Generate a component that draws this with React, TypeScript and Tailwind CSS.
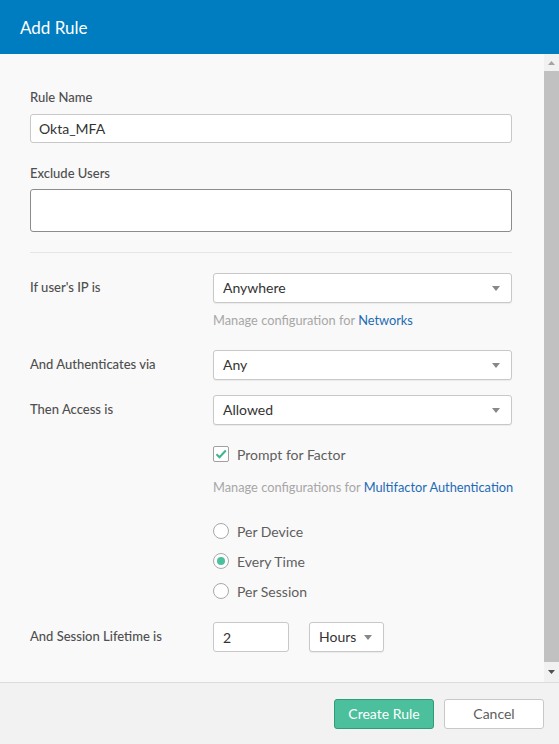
import React from "react";

const font = { fontFamily: "Lato, 'Liberation Sans', Arial, sans-serif" };

function Caret() {
  return (
    <svg width="8" height="5" viewBox="0 0 8 5" className="shrink-0">
      <path d="M0 0 L8 0 L4 5 Z" fill="#888" />
    </svg>
  );
}

function Select({ value, className = "" }: { value: string; className?: string }) {
  return (
    <div
      className={`h-[30px] flex items-center justify-between pl-[9px] pr-[11px] bg-white border border-[#c8c8c8] rounded-[3px] shadow-[0_1px_1px_rgba(0,0,0,0.06)] text-[14px] leading-[18px] text-[#333] ${className}`}
    >
      <span className="-mt-[1px]">{value}</span>
      <Caret />
    </div>
  );
}

function Radio({ checked, label }: { checked?: boolean; label: string }) {
  return (
    <div className="h-[30px] flex items-center">
      <div className="w-[16px] h-[16px] rounded-full border border-[#a8a8a8] bg-white flex items-center justify-center">
        {checked && <div className="w-[8px] h-[8px] rounded-full bg-[#4cbf9c]" />}
      </div>
      <span className="ml-[8px] text-[14px] text-[#5e5e5e]">{label}</span>
    </div>
  );
}

const label = "w-[183px] shrink-0 text-[13px] text-[#4f4f4f] font-medium";

export default function App() {
  return (
    <div className="w-[559px] h-[744px] flex flex-col bg-[#f9f9f9]" style={font}>
      <div className="h-[54px] shrink-0 bg-[#007cc0] flex items-center px-[20px]">
        <span className="text-white text-[17px] leading-none">Add Rule</span>
      </div>
      <div className="flex-1 flex min-h-0 border-b border-[#dcdcdc]">
        <div className="flex-1 min-w-0 pl-[30px] pr-[32px] pt-[34px]">
          <div className="text-[13px] leading-[18px] text-[#4f4f4f] font-medium">Rule Name</div>
          <div className="mt-[8px] h-[29px] bg-white border border-[#c8c8c8] rounded-[3px] flex items-center px-[8px] text-[14px] text-[#333]">
            Okta_MFA
          </div>
          <div className="mt-[21px] text-[13px] leading-[18px] text-[#4f4f4f] font-medium">Exclude Users</div>
          <div className="mt-[7px] h-[43px] bg-white border border-[#8c8c8c] rounded-[3px]" />
          <div className="mt-[20px] h-px bg-[#e6e6e6]" />

          <div className="mt-[20px] flex items-center">
            <div className={label}>If user's IP is</div>
            <Select value="Anywhere" className="flex-1" />
          </div>
          <div className="mt-[8px] ml-[183px] text-[12.8px] leading-[18px] text-[#a7a7a7]">
            Manage configuration for <span className="text-[#1d6bb5]">Networks</span>
          </div>

          <div className="mt-[21px] flex items-center">
            <div className={label}>And Authenticates via</div>
            <Select value="Any" className="flex-1" />
          </div>
          <div className="mt-[15px] flex items-center">
            <div className={label}>Then Access is</div>
            <Select value="Allowed" className="flex-1" />
          </div>

          <div className="ml-[183px]">
            <div className="mt-[21px] h-[16px] flex items-center">
              <div className="w-[16px] h-[16px] border border-[#a0a0a0] rounded-[2px] bg-white flex items-center justify-center">
                <svg width="12" height="10" viewBox="0 0 12 10">
                  <path d="M1.5 5.2 L4.5 8.2 L10.8 1.5" fill="none" stroke="#3fb48d" strokeWidth="2" />
                </svg>
              </div>
              <span className="ml-[8px] text-[14px] text-[#5e5e5e]">Prompt for Factor</span>
            </div>
            <div className="mt-[16px] text-[12.8px] leading-[18px] text-[#a7a7a7] whitespace-nowrap">
              Manage configurations for <span className="text-[#1d6bb5]">Multifactor Authentication</span>
            </div>
            <div className="mt-[20px]">
              <Radio label="Per Device" />
              <Radio checked label="Every Time" />
              <Radio label="Per Session" />
            </div>
          </div>

          <div className="mt-[16px] flex items-center">
            <div className={label}>And Session Lifetime is</div>
            <div className="w-[76px] h-[30px] bg-white border border-[#c8c8c8] rounded-[3px] flex items-center px-[9px] text-[14px] text-[#333]">
              2
            </div>
            <Select value="Hours" className="ml-[20px] w-[75px] pr-[9px]" />
          </div>
        </div>
        <div className="w-[15px] shrink-0 bg-[#f1f1f1] flex flex-col">
          <div className="h-[17px] flex items-center justify-center">
            <svg width="7" height="4" viewBox="0 0 7 4">
              <path d="M0 4 L7 4 L3.5 0 Z" fill="#a3a3a3" />
            </svg>
          </div>
          <div className="flex-1 bg-[#c1c1c1]" />
          <div className="h-[20px] flex items-center justify-center">
            <svg width="7" height="4" viewBox="0 0 7 4">
              <path d="M0 0 L7 0 L3.5 4 Z" fill="#505050" />
            </svg>
          </div>
        </div>
      </div>
      <div className="h-[61px] shrink-0 bg-[#f2f2f2] flex items-center justify-end pr-[15px] gap-[10px]">
        <div className="w-[100px] h-[30px] rounded-[3px] bg-[#4cbf9c] border border-[#2f9c78] flex items-center justify-center text-white text-[14px]">
          Create Rule
        </div>
        <div className="w-[100px] h-[30px] rounded-[3px] bg-white border border-[#c8c8c8] flex items-center justify-center text-[#5e5e5e] text-[14px]">
          Cancel
        </div>
      </div>
    </div>
  );
}
